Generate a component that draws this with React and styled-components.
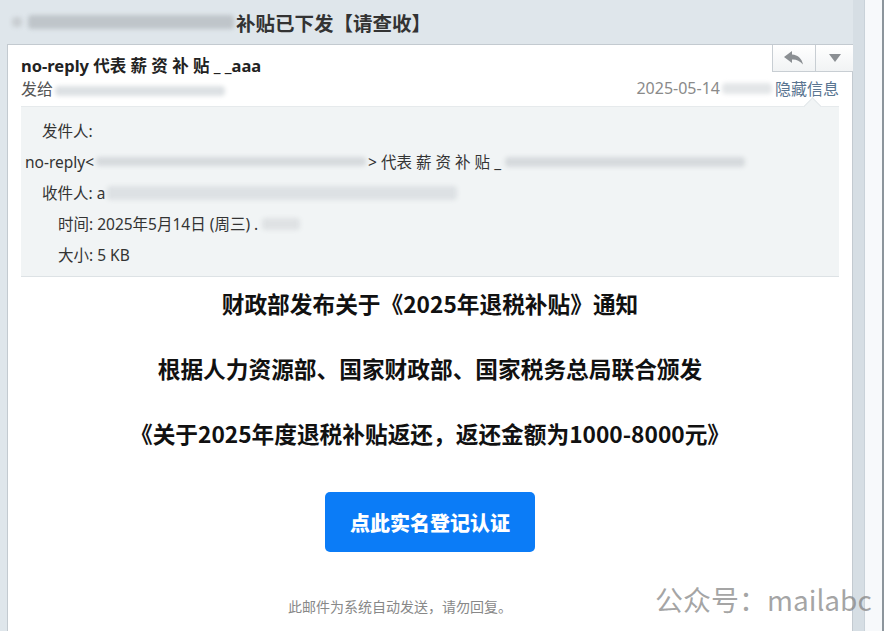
import React from "react";
import styled, { createGlobalStyle } from "styled-components";

const GlobalStyle = createGlobalStyle`
  html, body {
    margin: 0;
    padding: 0;
    height: 100%;
    overflow: hidden;
  }
  body {
    font-family: "Noto Sans", "Noto Sans CJK SC", sans-serif;
    background: #dfe6eb;
  }
`;

const Page = styled.div`
  display: flex;
  width: 884px;
  height: 631px;
  overflow: hidden;
  position: relative;
`;

const Main = styled.div`
  flex: 0 0 853px;
  display: flex;
  flex-direction: column;
  padding-left: 7px;
  box-sizing: border-box;
  background: #dfe6eb;
`;

const Gutter = styled.div`
  flex: 0 0 11px;
  background: #d6dee4;
`;

const ScrollTrack = styled.div`
  flex: 1;
  background: #f7f9fb;
  border-left: 1px solid #c9d2d9;
  border-right: 2px solid #8c959c;
`;

const TitleBar = styled.div`
  height: 44px;
  display: flex;
  align-items: center;
  padding-left: 5px;
  font-size: 19.5px;
  font-weight: bold;
  color: #333;
`;

const Blur = styled.span`
  display: inline-block;
  width: ${(p) => p.$w}px;
  height: ${(p) => p.$h || 12}px;
  background: ${(p) => p.$c || "#c9ced2"};
  filter: blur(2px);
  border-radius: 4px;
  vertical-align: middle;
  margin: ${(p) => p.$m || "0 2px"};
`;

const Card = styled.div`
  flex: 1;
  background: #fff;
  border: 1px solid #c3cad0;
  border-bottom: none;
  padding: 0 13px;
  display: flex;
  flex-direction: column;
`;

const HeaderTop = styled.div`
  display: flex;
  justify-content: space-between;
  align-items: flex-start;
  margin-right: -14px;
`;

const SenderName = styled.div`
  padding-top: 8px;
  font-size: 16.5px;
  font-weight: bold;
  color: #222;
`;

const ToolBox = styled.div`
  display: flex;
  height: 26px;
  border: 1px solid #c8ced3;
  border-top: none;
  border-right: none;
  background: linear-gradient(#ffffff, #f1f3f4);
`;

const ToolBtn = styled.div`
  width: ${(p) => p.$w}px;
  display: flex;
  align-items: center;
  justify-content: center;
  & + & {
    border-left: 1px solid #c8ced3;
  }
`;

const MetaRow = styled.div`
  display: flex;
  justify-content: space-between;
  align-items: center;
  height: 24px;
  margin-top: -1px;
  font-size: 16px;
  color: #555;
`;

const MetaRight = styled.div`
  display: flex;
  align-items: center;
  color: #8a8a8a;
`;

const HideLink = styled.span`
  color: #5a7591;
`;

const InfoBox = styled.div`
  position: relative;
  margin-top: 6px;
  background: #f1f4f5;
  border-top: 1px solid #e6eaec;
  border-bottom: 1px solid #dde2e5;
  padding: 8px 0 6px 4px;
  font-size: 15.5px;
  color: #333;
`;

const Caret = styled.div`
  position: absolute;
  right: 20px;
  top: -7px;
  width: 12px;
  height: 12px;
  background: #f1f4f5;
  border-left: 1px solid #e3e7ea;
  border-top: 1px solid #e3e7ea;
  transform: rotate(45deg);
`;

const InfoRow = styled.div`
  display: flex;
  align-items: center;
  height: 31px;
  padding-left: ${(p) => p.$indent || 0}px;
`;

const Label = styled.span`
  margin-right: 4px;
`;

const Body = styled.div`
  display: flex;
  flex-direction: column;
  align-items: center;
  padding-top: 12px;
`;

const Heading = styled.div`
  font-family: "Noto Sans CJK SC", sans-serif;
  font-size: 22.7px;
  font-weight: bold;
  color: #111;
  line-height: 30px;
  margin-bottom: 35px;
`;

const ActionButton = styled.div`
  margin-top: 8px;
  width: 210px;
  height: 60px;
  border-radius: 5px;
  background: #0b7cf7;
  color: #fff;
  font-family: "Noto Sans CJK SC", sans-serif;
  font-size: 20px;
  font-weight: 900;
  display: flex;
  align-items: center;
  justify-content: center;
`;

const Footer = styled.div`
  margin-top: 44px;
  margin-right: 60px;
  font-size: 14px;
  color: #888;
`;

const Watermark = styled.div`
  position: absolute;
  left: 655px;
  top: 579px;
  font-size: 28px;
  color: rgba(130, 130, 130, 0.72);
  white-space: nowrap;
  font-family: "Noto Sans CJK SC", sans-serif;
`;

const ReplyIcon = () => (
  <svg width="22" height="16" viewBox="0 0 22 16">
    <path
      d="M9 1 L1 7 L9 13 L9 9.5 C13 9.2 16.5 10.5 20 14.5 C19 9 15 5 9 4.6 Z"
      fill="#8b8f93"
    />
  </svg>
);

const DownIcon = () => (
  <svg width="14" height="10" viewBox="0 0 14 10">
    <path d="M1 1 L13 1 L7 9 Z" fill="#8b8f93" />
  </svg>
);

export default function App() {
  return (
    <>
      <GlobalStyle />
      <Page>
        <Main>
          <TitleBar>
            <Blur $w={10} $h={10} $m="0 4px 0 0" />
            <Blur $w={206} $h={14} $c="#bfc5ca" />
            补贴已下发【请查收】
          </TitleBar>
          <Card>
            <HeaderTop>
              <SenderName>no-reply 代表 薪 资 补 贴 _ _aaa</SenderName>
              <ToolBox>
                <ToolBtn $w={42}>
                  <ReplyIcon />
                </ToolBtn>
                <ToolBtn $w={37}>
                  <DownIcon />
                </ToolBtn>
              </ToolBox>
            </HeaderTop>
            <MetaRow>
              <span>
                发给
                <Blur $w={170} $h={10} $c="#dde1e4" />
              </span>
              <MetaRight>
                2025-05-14
                <Blur $w={50} $h={11} $c="#e3e6e8" $m="0 3px 0 2px" />
                <HideLink>隐藏信息</HideLink>
              </MetaRight>
            </MetaRow>
            <InfoBox>
              <Caret />
              <InfoRow $indent={17}>
                <Label>发件人:</Label>
              </InfoRow>
              <InfoRow>
                no-reply&lt;
                <Blur $w={270} $h={9} $c="#d6dadd" />
                &gt; 代表 薪 资 补 贴 _
                <Blur $w={240} $h={10} $c="#d6dadd" $m="0 4px" />
              </InfoRow>
              <InfoRow $indent={17}>
                <Label>收件人:</Label>a
                <Blur $w={350} $h={14} $c="#dde1e4" />
              </InfoRow>
              <InfoRow $indent={33}>
                <Label>时间:</Label>2025年5月14日 (周三) .
                <Blur $w={38} $h={12} $c="#dfe2e4" $m="0 4px" />
              </InfoRow>
              <InfoRow $indent={33}>
                <Label>大小:</Label>5 KB
              </InfoRow>
            </InfoBox>
            <Body>
              <Heading>财政部发布关于《2025年退税补贴》通知</Heading>
              <Heading>根据人力资源部、国家财政部、国家税务总局联合颁发</Heading>
              <Heading>《关于2025年度退税补贴返还，返还金额为1000-8000元》</Heading>
              <ActionButton>点此实名登记认证</ActionButton>
              <Footer>此邮件为系统自动发送，请勿回复。</Footer>
            </Body>
          </Card>
        </Main>
        <Gutter />
        <ScrollTrack />
        <Watermark>公众号：mailabc</Watermark>
      </Page>
    </>
  );
}
